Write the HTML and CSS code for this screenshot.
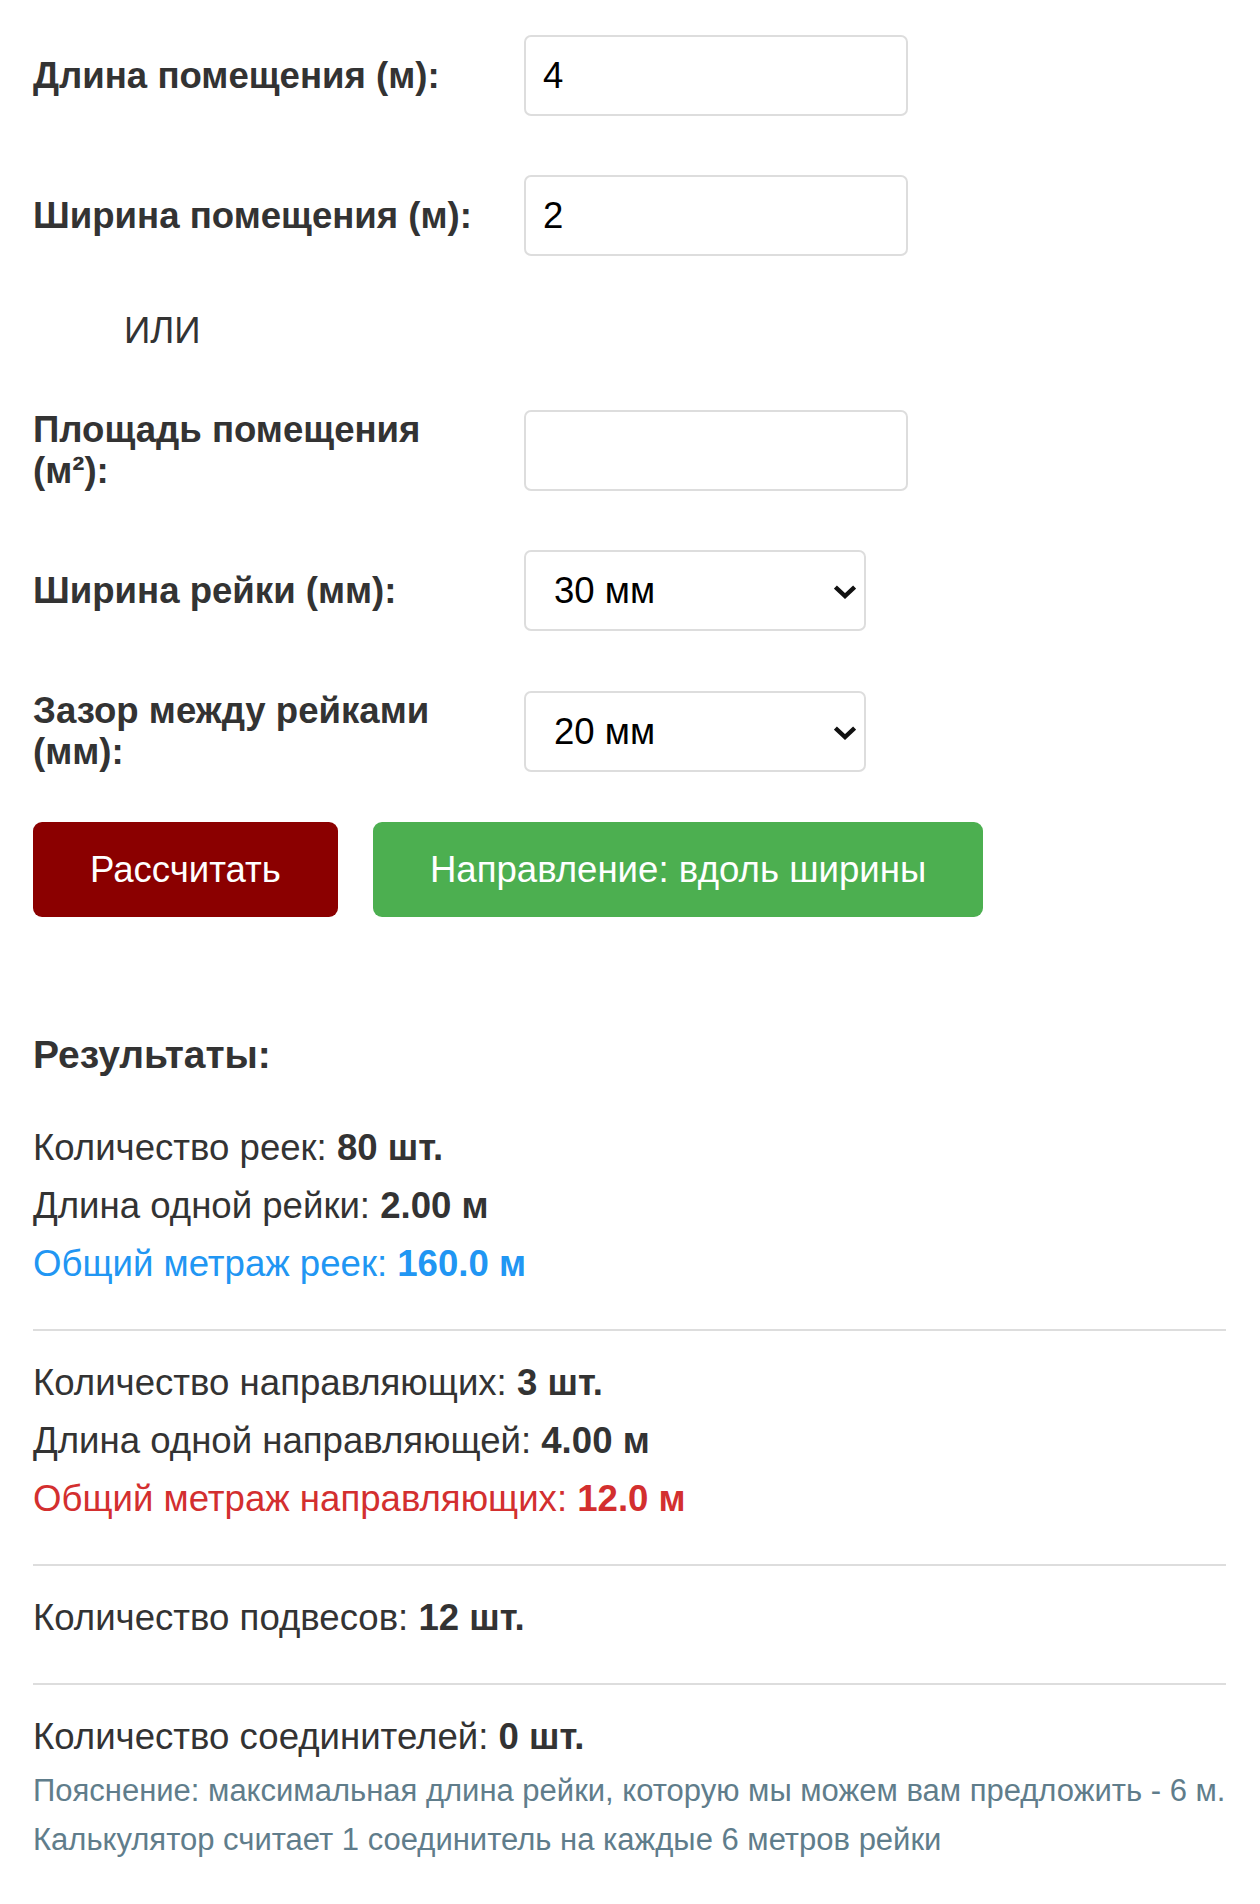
FILE: index.html
```html
<!DOCTYPE html>
<html lang="ru">
<head>
    <meta charset="UTF-8">
    <meta name="viewport" content="width=device-width, initial-scale=1.0">
    <title>Калькулятор реечного потолка</title>
    <link rel="stylesheet" href="styles.css">
</head>
<body>
    <div class="calc">
        <div class="form-row">
            <label class="form-label" for="length">Длина помещения (м):</label>
            <input class="form-input" type="text" id="length" value="4">
        </div>

        <div class="form-row">
            <label class="form-label" for="width">Ширина помещения (м):</label>
            <input class="form-input" type="text" id="width" value="2">
        </div>

        <div class="or-text">ИЛИ</div>

        <div class="form-row">
            <label class="form-label" for="area">Площадь помещения (м²):</label>
            <input class="form-input" type="text" id="area" value="">
        </div>

        <div class="form-row">
            <label class="form-label" for="rail">Ширина рейки (мм):</label>
            <div class="select-wrap">
                <select class="form-select" id="rail">
                    <option>30 мм</option>
                    <option>50 мм</option>
                    <option>100 мм</option>
                </select>
                <svg class="select-arrow" width="22" height="15" viewBox="0 0 22 15">
                    <path d="M3 3.5 L11 11 L19 3.5" fill="none" stroke="#111" stroke-width="4.4" stroke-linecap="square" stroke-linejoin="miter"/>
                </svg>
            </div>
        </div>

        <div class="form-row">
            <label class="form-label" for="gap">Зазор между рейками (мм):</label>
            <div class="select-wrap">
                <select class="form-select" id="gap">
                    <option>20 мм</option>
                    <option>15 мм</option>
                    <option>0 мм</option>
                </select>
                <svg class="select-arrow" width="22" height="15" viewBox="0 0 22 15">
                    <path d="M3 3.5 L11 11 L19 3.5" fill="none" stroke="#111" stroke-width="4.4" stroke-linecap="square" stroke-linejoin="miter"/>
                </svg>
            </div>
        </div>

        <div class="buttons">
            <button class="btn btn-calc">Рассчитать</button>
            <button class="btn btn-dir">Направление: вдоль ширины</button>
        </div>

        <div class="results">
            <h3 class="results-title">Результаты:</h3>

            <div class="result-group">
                <p>Количество реек: <b>80 шт.</b></p>
                <p>Длина одной рейки: <b>2.00 м</b></p>
                <p class="total-blue">Общий метраж реек: <b>160.0 м</b></p>
            </div>

            <div class="result-group">
                <p>Количество направляющих: <b>3 шт.</b></p>
                <p>Длина одной направляющей: <b>4.00 м</b></p>
                <p class="total-red">Общий метраж направляющих: <b>12.0 м</b></p>
            </div>

            <div class="result-group">
                <p>Количество подвесов: <b>12 шт.</b></p>
            </div>

            <div class="result-group last">
                <p>Количество соединителей: <b>0 шт.</b></p>
                <p class="note">Пояснение: максимальная длина рейки, которую мы можем вам предложить - 6 м.</p>
                <p class="note">Калькулятор считает 1 соединитель на каждые 6 метров рейки</p>
            </div>
        </div>
    </div>
</body>
</html>
```

FILE: styles.css
```css
* {
    margin: 0;
    padding: 0;
    box-sizing: border-box;
}

body {
    background: #fff;
    color: #333;
    font-family: "Liberation Sans", Arial, sans-serif;
}

.calc {
    width: 1226px;
    padding: 35px 0 40px 33px;
}

.form-row {
    display: flex;
    align-items: center;
    margin-bottom: 59px;
}

.form-label {
    flex: 0 0 491px;
    padding-right: 30px;
    font-size: 36.6px;
    font-weight: bold;
    line-height: 41px;
    color: #333;
}

.form-input,
.form-select {
    height: 81px;
    border: 2px solid #ddd;
    border-radius: 7px;
    background: #fff;
    padding: 0 17px;
    font-family: "Liberation Sans", Arial, sans-serif;
    font-size: 36.6px;
    color: #000;
    outline: none;
}

.form-input {
    width: 384px;
}

.or-text {
    padding-left: 91px;
    margin: -5px 0 58px;
    font-size: 36.6px;
    line-height: 41px;
    color: #333;
}

.select-wrap {
    position: relative;
}

.form-select {
    width: 342px;
    appearance: none;
    -webkit-appearance: none;
    padding-left: 28px;
}

.select-arrow {
    position: absolute;
    right: 10px;
    top: 35px;
    pointer-events: none;
}

.buttons {
    display: flex;
    gap: 35px;
    margin-top: -9px;
}

.btn {
    height: 95px;
    padding: 0 57px;
    border: none;
    border-radius: 9px;
    color: #fff;
    font-family: "Liberation Sans", Arial, sans-serif;
    font-size: 36.6px;
    cursor: pointer;
}

.btn-calc {
    background: #8b0000;
}

.btn-dir {
    background: #4caf50;
}

.results {
    margin-top: 115px;
}

.results-title {
    font-size: 39px;
    line-height: 46px;
    font-weight: bold;
    color: #333;
    margin-bottom: 17px;
}

.result-group {
    padding: 23px 0 36px;
    border-bottom: 2px solid #ddd;
}

.result-group:first-of-type {
    padding-top: 24px;
}

.result-group.last {
    border-bottom: none;
}

.result-group p {
    font-size: 36.6px;
    line-height: 58px;
    color: #333;
}

.result-group .total-blue {
    color: #2196f3;
}

.result-group .total-red {
    color: #d32f2f;
}

.result-group .note {
    font-size: 31px;
    line-height: 49px;
    color: #607d8b;
}
```
